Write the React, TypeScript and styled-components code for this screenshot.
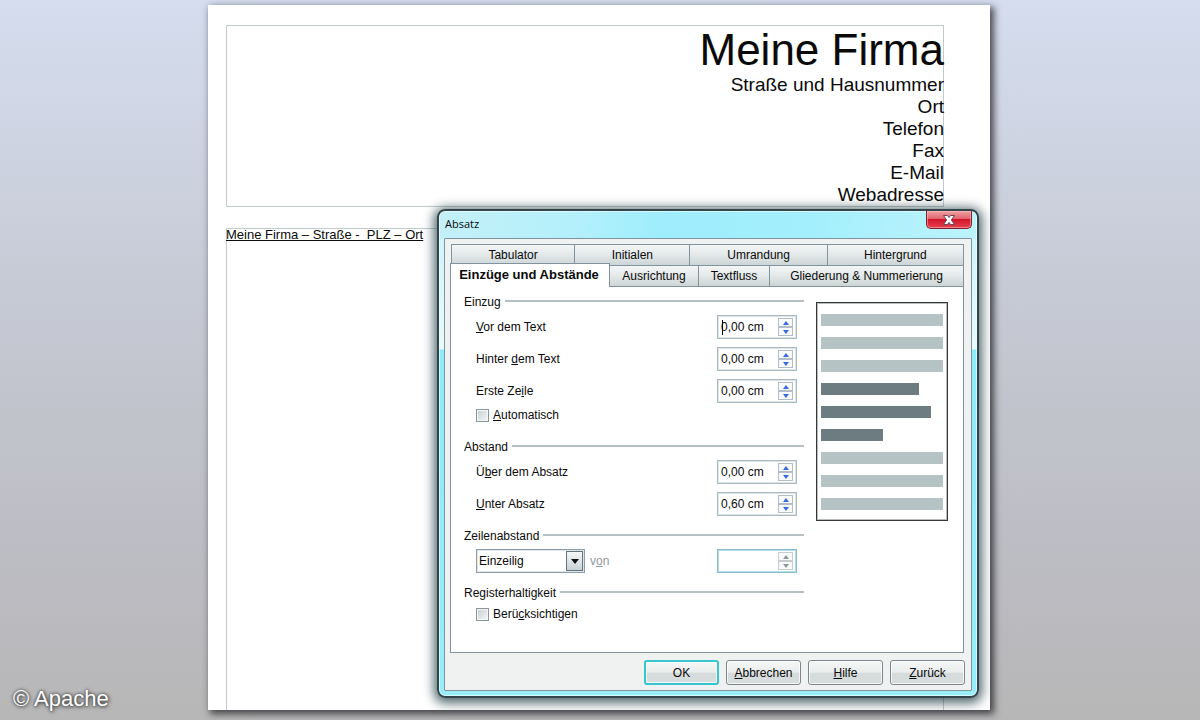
import React from "react";
import styled, { createGlobalStyle, css } from "styled-components";

const GlobalStyle = createGlobalStyle`
  *, *::before, *::after { box-sizing: border-box; }
  body {
    margin: 0;
    font-family: "Liberation Sans", Arial, sans-serif;
    color: #0a0a0a;
  }
  button, input, select { font: inherit; color: inherit; }
`;

const Desktop = styled.div`
  position: relative;
  display: flex;
  min-height: 100vh;
  padding: 5px 210px 10px 208px;
  background: linear-gradient(#d5ddee, #c5c8d2 45%, #bbbbc1 82%, #b7b7b7);
`;

const Sheet = styled.main`
  position: relative;
  flex: 1;
  min-width: 782px;
  display: flex;
  flex-direction: column;
  gap: 21px;
  padding: 20px 46px 0 18px;
  background: #fff;
  box-shadow: 3px 3px 7px 1px rgba(40, 40, 45, 0.8);
`;

const Letterhead = styled.header`
  border: 1px solid #c0cccc;
  border-right-width: 0;
  box-shadow: inset -1px 0 #c0cccc;
  text-align: right;
  font-size: 19px;
  line-height: 22px;
`;

const Company = styled.h1`
  margin: 0;
  font-size: 44px;
  line-height: 48px;
  font-weight: 400;
`;

const ContactLine = styled.div``;

const TextFrame = styled.section`
  flex: 1;
  border: 1px solid #c0cccc;
  border-width: 1px 0 0;
  box-shadow: inset 1px 0 #c0cccc, inset -1px 0 #c0cccc;
`;

const SenderLine = styled.p`
  margin: 0;
  font-size: 13px;
  line-height: 12px;
  text-decoration: underline;
  white-space: pre;
`;

const Credit = styled.footer`
  position: absolute;
  left: 13px;
  bottom: 8px;
  font-size: 22px;
  line-height: 26px;
  color: #fff;
  text-shadow: 0 0 3px #333, 1px 1px 4px #444;
`;

const Dialog = styled.div`
  position: absolute;
  left: 229px;
  top: 204px;
  width: 542px;
  padding: 0 5px 5px;
  border: 2px solid #34444c;
  border-radius: 8px;
  font-size: 12px;
  line-height: 16px;
  background:
    linear-gradient(100deg, #c4f0f8, #b4f0fb 25%, #9eedfd 42%, #a4effd 70%, #bdf3fb) top / 100% 28px no-repeat,
    linear-gradient(#c8f4fb, #e9fafc 138px, #8debfa 139px, #98edf9);
  box-shadow: 0 2px 11px 3px rgba(35, 65, 70, 0.8), inset 0 0 0 1px rgba(235, 255, 255, 0.7);
`;

const TitleBar = styled.div`
  display: flex;
  justify-content: space-between;
  height: 27px;
`;

const Title = styled.h2`
  margin: 0;
  padding: 5px 0 0 1px;
  font: 400 11px/16px "Open Sans", "Noto Sans", sans-serif;
`;

const CloseButton = styled.button`
  display: flex;
  align-items: center;
  justify-content: center;
  width: 46px;
  height: 18px;
  padding: 0;
  border: 1px solid #7c1f2a;
  border-top: 0;
  border-radius: 0 0 5px 5px;
  background: linear-gradient(#f0a2a6, #e2646c 45%, #d3152a 50%, #e6404e);
  box-shadow: inset 0 0 0 1px rgba(255, 190, 190, 0.55);
`;

const Client = styled.form`
  padding: 5px 7px 5px 5px;
  border: 1px solid #7f949e;
  border-radius: 1px;
  background: #f0f2f2;
`;

const Tab = styled.button<{ $active?: boolean; $front?: boolean }>`
  height: ${(p) => (p.$front ? "22px" : "21px")};
  padding: 0;
  border: 1px solid #8293a0;
  border-width: 1px 1px ${(p) => (p.$front ? "1px" : "0")} 0;
  background: linear-gradient(#f4f6f6, #e3e8e8 50%, #ccd5d6);
  text-align: center;
  line-height: 16px;
  white-space: nowrap;
  &:first-child { border-left-width: 1px; }
  ${(p) =>
    p.$active &&
    css`
      height: 24px;
      margin-top: -2px;
      padding: 0 2px 1px 0;
      border-bottom-width: 0;
      background: #fff;
      font-size: 13px;
      font-weight: 700;
    `}
`;

const TabRow = styled.div<{ $columns: string; $back?: boolean }>`
  display: grid;
  grid-template-columns: ${(p) => p.$columns};
  margin-left: ${(p) => (p.$back ? "1px" : "0")};
`;

const Panel = styled.div`
  display: flex;
  gap: 12px;
  min-height: 366px;
  padding: 7px 15px 0 13px;
  border: 1px solid #8293a0;
  border-top: 0;
  background: #fff;
`;

const Settings = styled.div`
  flex: 1;
  display: flex;
  flex-direction: column;
  gap: 12px;
`;

const Group = styled.fieldset<{ $spaced?: boolean }>`
  display: block;
  min-width: 0;
  margin: 0;
  padding: 0 0 ${(p) => (p.$spaced ? "4px" : "0")};
  border: 0;
`;

const Legend = styled.legend`
  display: flex;
  gap: 4px;
  width: 100%;
  margin-bottom: 5px;
  padding: 0;
  &::after {
    content: "";
    flex: 1;
    height: 2px;
    margin-top: 6px;
    background: #b4c0c2;
  }
`;

const Rows = styled.div`
  display: grid;
  gap: 8px;
  padding: 0 7px 0 12px;
`;

const Row = styled.div`
  display: flex;
  align-items: center;
  justify-content: space-between;
  height: 24px;
`;

const Picker = styled.div`
  display: flex;
  align-items: center;
  gap: 5px;
`;

const Muted = styled.label`
  color: #8f989e;
`;

const CheckRow = styled.label<{ $below?: boolean }>`
  display: flex;
  align-items: center;
  gap: 4px;
  height: 16px;
  margin: ${(p) => (p.$below ? "4px" : "0")} 0 0 12px;
`;

const CheckBox = styled.input`
  appearance: none;
  width: 13px;
  height: 13px;
  margin: 0;
  border: 1px solid #8a9599;
  background: linear-gradient(135deg, #c4ced1, #f6f8f8);
  box-shadow: inset 0 0 0 1px #f5f7f7;
`;

const Spin = styled.div<{ $disabled?: boolean; $caret?: boolean }>`
  position: relative;
  display: flex;
  align-items: center;
  width: 80px;
  height: 24px;
  padding: 0 3px;
  border: 1px solid ${(p) => (p.$disabled ? "#86bccb" : "#a9b9c1")};
  box-shadow: inset 0 0 0 1px ${(p) => (p.$disabled ? "#b5dde7" : "#dde5e9")};
  background: #fff;
  ${(p) =>
    p.$caret &&
    css`
      &::before {
        content: "";
        position: absolute;
        left: 4px;
        top: 4px;
        width: 1px;
        height: 15px;
        background: #000;
      }
    `}
`;

const SpinInput = styled.input`
  flex: 1;
  min-width: 0;
  height: 20px;
  padding: 0;
  border: 0;
  outline: 0;
  background: transparent;
`;

const SpinButtons = styled.div`
  display: grid;
  width: 15px;
`;

const SpinButton = styled.button`
  display: flex;
  align-items: center;
  justify-content: center;
  height: 9px;
  padding: 0;
  border: 1px solid #b1bec7;
  background: #f8fafb;
  color: #3569e6;
  &:disabled { color: #8e999e; border-color: #c3ccd0; }
`;

const SelectBox = styled.div`
  position: relative;
  width: 109px;
  height: 24px;
`;

const Select = styled.select`
  appearance: none;
  width: 100%;
  height: 100%;
  padding: 0 20px 0 2px;
  border: 1px solid #8b9eaa;
  border-radius: 0;
  box-shadow: inset 0 0 0 1px #dfe5e8;
  background: #fff;
`;

const SelectArrow = styled.span`
  position: absolute;
  top: 2px;
  right: 2px;
  display: flex;
  align-items: center;
  justify-content: center;
  width: 17px;
  height: 20px;
  border: 1px solid #64747c;
  background: linear-gradient(#f6f8f8, #c9d2d5);
  pointer-events: none;
`;

const Preview = styled.div`
  align-self: flex-start;
  display: grid;
  gap: 11px;
  width: 132px;
  height: 219px;
  margin-top: 8px;
  padding: 11px 4px 10px;
  border: 1px solid #36393b;
  box-shadow: inset 0 0 0 1px #b9bcbd;
`;

const Bar = styled.div<{ $width?: number }>`
  width: ${(p) => p.$width ?? 122}px;
  background: ${(p) => (p.$width ? "#6d7c80" : "#b6c3c4")};
`;

const Actions = styled.div`
  display: flex;
  justify-content: flex-end;
  gap: 7px;
  margin: 7px -1px 0 0;
`;

const Action = styled.button<{ $primary?: boolean }>`
  width: 75px;
  height: 25px;
  padding: 0;
  border: ${(p) => (p.$primary ? "2px solid #35c6cf" : "1px solid #7d878b")};
  border-radius: 3px;
  background: linear-gradient(#f6f7f7, #eaeded 48%, #d5dbdb 55%, #d8dede);
  box-shadow: inset 0 0 0 1px rgba(255, 255, 255, 0.75);
`;

const contact = ["Straße und Hausnummer", "Ort", "Telefon", "Fax", "E-Mail", "Webadresse"];
const previewBars = [undefined, undefined, undefined, 98, 110, 62, undefined, undefined, undefined];

function SpinField({ id, value, disabled, caret }: { id: string; value: string; disabled?: boolean; caret?: boolean }) {
  return (
    <Spin $disabled={disabled} $caret={caret}>
      <SpinInput id={id} defaultValue={value} disabled={disabled} />
      <SpinButtons>
        <SpinButton type="button" disabled={disabled} aria-label="Erhöhen">
          <svg width="6" height="4" viewBox="0 0 6 4"><path d="M3 0 6 4H0Z" fill="currentColor" /></svg>
        </SpinButton>
        <SpinButton type="button" disabled={disabled} aria-label="Verringern">
          <svg width="6" height="4" viewBox="0 0 6 4"><path d="M0 0H6L3 4Z" fill="currentColor" /></svg>
        </SpinButton>
      </SpinButtons>
    </Spin>
  );
}

export default function App() {
  return (
    <>
      <GlobalStyle />
      <Desktop>
        <Sheet>
          <Letterhead>
            <Company>Meine Firma</Company>
            {contact.map((line) => (
              <ContactLine key={line}>{line}</ContactLine>
            ))}
          </Letterhead>
          <TextFrame>
            <SenderLine>{"Meine Firma – Straße -  PLZ – Ort"}</SenderLine>
          </TextFrame>

          <Dialog role="dialog" aria-labelledby="dialog-title">
            <TitleBar>
              <Title id="dialog-title">Absatz</Title>
              <CloseButton type="button" aria-label="Schließen">
                <svg width="14" height="12" viewBox="0 0 14 12">
                  <path d="M1.5 1.5H5.5L7 3.6 8.5 1.5H12.5L9.4 6 12.5 10.5H8.5L7 8.4 5.5 10.5H1.5L4.6 6Z" fill="#fff" stroke="#5f4a58" strokeWidth="1" />
                </svg>
              </CloseButton>
            </TitleBar>
            <Client onSubmit={(e) => e.preventDefault()}>
              <TabRow role="tablist" $columns="124fr 115fr 137fr 136fr" $back>
                <Tab type="button" role="tab">Tabulator</Tab>
                <Tab type="button" role="tab">Initialen</Tab>
                <Tab type="button" role="tab">Umrandung</Tab>
                <Tab type="button" role="tab">Hintergrund</Tab>
              </TabRow>
              <TabRow role="tablist" $columns="160fr 89fr 71fr 194fr">
                <Tab type="button" role="tab" aria-selected $front $active>Einzüge und Abstände</Tab>
                <Tab type="button" role="tab" $front>Ausrichtung</Tab>
                <Tab type="button" role="tab" $front>Textfluss</Tab>
                <Tab type="button" role="tab" $front>Gliederung &amp; Nummerierung</Tab>
              </TabRow>
              <Panel>
                <Settings>
                  <Group $spaced>
                    <Legend>Einzug</Legend>
                    <Rows>
                      <Row>
                        <label htmlFor="before"><u>V</u>or dem Text</label>
                        <SpinField id="before" value="0,00 cm" caret />
                      </Row>
                      <Row>
                        <label htmlFor="after">Hinter <u>d</u>em Text</label>
                        <SpinField id="after" value="0,00 cm" />
                      </Row>
                      <Row>
                        <label htmlFor="first">Erste Ze<u>i</u>le</label>
                        <SpinField id="first" value="0,00 cm" />
                      </Row>
                    </Rows>
                    <CheckRow $below>
                      <CheckBox type="checkbox" />
                      <span><u>A</u>utomatisch</span>
                    </CheckRow>
                  </Group>
                  <Group>
                    <Legend>Abstand</Legend>
                    <Rows>
                      <Row>
                        <label htmlFor="above">Ü<u>b</u>er dem Absatz</label>
                        <SpinField id="above" value="0,00 cm" />
                      </Row>
                      <Row>
                        <label htmlFor="below"><u>U</u>nter Absatz</label>
                        <SpinField id="below" value="0,60 cm" />
                      </Row>
                    </Rows>
                  </Group>
                  <Group>
                    <Legend>Zeilenabstand</Legend>
                    <Rows>
                      <Row>
                        <Picker>
                          <SelectBox>
                            <Select aria-label="Zeilenabstand" defaultValue="Einzeilig">
                              <option>Einzeilig</option>
                            </Select>
                            <SelectArrow>
                              <svg width="8" height="5" viewBox="0 0 8 5"><path d="M0 0H8L4 5Z" fill="#111" /></svg>
                            </SelectArrow>
                          </SelectBox>
                          <Muted htmlFor="spacing">v<u>o</u>n</Muted>
                        </Picker>
                        <SpinField id="spacing" value="" disabled />
                      </Row>
                    </Rows>
                  </Group>
                  <Group>
                    <Legend>Registerhaltigkeit</Legend>
                    <CheckRow>
                      <CheckBox type="checkbox" />
                      <span>Berü<u>c</u>ksichtigen</span>
                    </CheckRow>
                  </Group>
                </Settings>
                <Preview aria-hidden="true">
                  {previewBars.map((width, i) => (
                    <Bar key={i} $width={width} />
                  ))}
                </Preview>
              </Panel>
              <Actions>
                <Action type="submit" $primary>OK</Action>
                <Action type="button"><u>A</u>bbrechen</Action>
                <Action type="button"><u>H</u>ilfe</Action>
                <Action type="button"><u>Z</u>urück</Action>
              </Actions>
            </Client>
          </Dialog>
        </Sheet>
        <Credit>© Apache</Credit>
      </Desktop>
    </>
  );
}
